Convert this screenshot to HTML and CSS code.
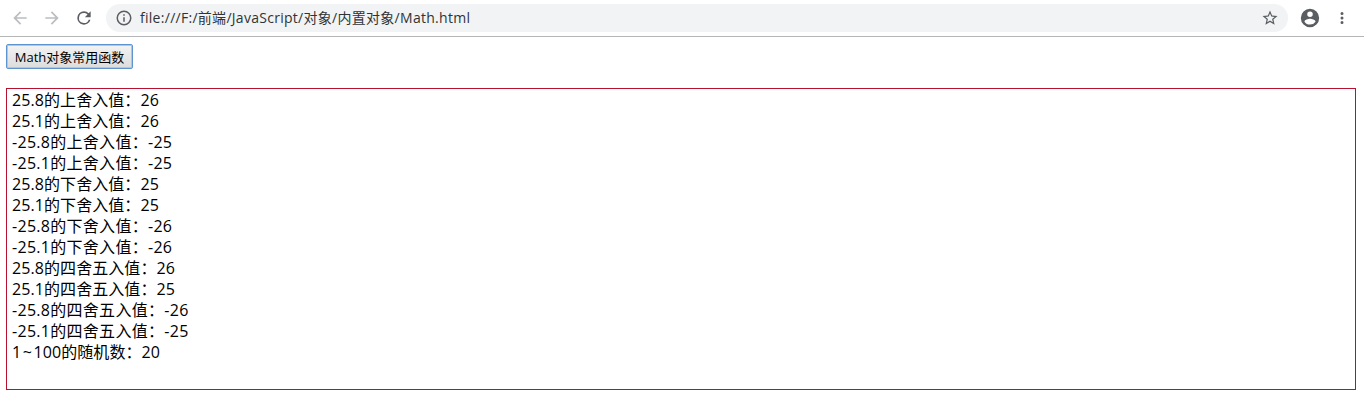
FILE: index.html
```html
<!DOCTYPE html>
<html lang="zh-CN">
<head>
    <meta charset="UTF-8">
    <title>Math</title>
    <link rel="stylesheet" href="styles.css">
</head>
<body>
    <div class="toolbar">
        <svg class="nav-icon disabled" viewBox="0 0 24 24"><path d="M20 11H7.83l5.59-5.59L12 4l-8 8 8 8 1.41-1.41L7.83 13H20v-2z"/></svg>
        <svg class="nav-icon disabled" viewBox="0 0 24 24"><path d="M12 4l-1.41 1.41L16.17 11H4v2h12.17l-5.58 5.59L12 20l8-8z"/></svg>
        <svg class="nav-icon" viewBox="0 0 24 24"><path d="M17.65 6.35A7.96 7.96 0 0 0 12 4a8 8 0 1 0 7.73 10h-2.08A6 6 0 1 1 12 6c1.66 0 3.14.69 4.22 1.78L13 11h7V4l-2.35 2.35z"/></svg>
        <div class="address-bar">
            <svg class="info-icon" viewBox="0 0 24 24"><path d="M11 17h2v-6h-2v6zm1-15a10 10 0 1 0 0 20 10 10 0 0 0 0-20zm0 18a8 8 0 1 1 0-16 8 8 0 0 1 0 16zM11 9h2V7h-2v2z"/></svg>
            <span class="url">file:///F:/前端/JavaScript/对象/内置对象/Math.html</span>
            <svg class="star-icon" viewBox="0 0 24 24"><path d="M22 9.24l-7.19-.62L12 2 9.19 8.63 2 9.24l5.46 4.73L5.82 21 12 17.27 18.18 21l-1.63-7.03L22 9.24zM12 15.4l-3.76 2.27 1-4.28-3.32-2.88 4.38-.38L12 6.1l1.71 4.04 4.38.38-3.32 2.88 1 4.28L12 15.4z"/></svg>
        </div>
        <svg class="user-icon" viewBox="0 0 24 24"><path d="M12 2a10 10 0 1 0 0 20 10 10 0 0 0 0-20zm0 3a3 3 0 1 1 0 6 3 3 0 0 1 0-6zm0 14.2a7.2 7.2 0 0 1-6-3.22c.03-1.99 4-3.08 6-3.08 1.99 0 5.97 1.09 6 3.08a7.2 7.2 0 0 1-6 3.22z"/></svg>
        <svg class="menu-icon" viewBox="0 0 24 24"><path d="M12 8a2 2 0 1 0 0-4 2 2 0 0 0 0 4zm0 2a2 2 0 1 0 0 4 2 2 0 0 0 0-4zm0 6a2 2 0 1 0 0 4 2 2 0 0 0 0-4z"/></svg>
    </div>

    <div class="page">
        <button class="math-btn">Math对象常用函数</button>
        <div class="result">
            <p>25.8的上舍入值：26</p>
            <p>25.1的上舍入值：26</p>
            <p class="negative">-25.8的上舍入值：-25</p>
            <p class="negative">-25.1的上舍入值：-25</p>
            <p>25.8的下舍入值：25</p>
            <p>25.1的下舍入值：25</p>
            <p class="negative">-25.8的下舍入值：-26</p>
            <p class="negative">-25.1的下舍入值：-26</p>
            <p>25.8的四舍五入值：26</p>
            <p>25.1的四舍五入值：25</p>
            <p class="negative">-25.8的四舍五入值：-26</p>
            <p class="negative">-25.1的四舍五入值：-25</p>
            <p><span class="range">1~</span>100的随机数：20</p>
        </div>
    </div>
</body>
</html>
```

FILE: styles.css
```css
* {
    margin: 0;
    padding: 0;
    box-sizing: border-box;
}

body {
    background: #fff;
    color: #000;
    font-family: "Open Sans", "Noto Sans CJK SC", sans-serif;
    font-size: 16px;
}

/* Browser toolbar */
.toolbar {
    display: flex;
    align-items: center;
    height: 37px;
    padding-left: 10px;
    border-bottom: 1px solid #b4b5b7;
}

.toolbar svg {
    flex: none;
    fill: #5a5d61;
}

.nav-icon {
    width: 20px;
    height: 20px;
    margin-right: 12px;
}

.toolbar .disabled {
    fill: #bcbdbf;
}

.address-bar {
    display: flex;
    align-items: center;
    width: 1182px;
    height: 28px;
    padding: 0 9px 0 9px;
    border-radius: 14px;
    background: #f1f3f4;
}

.info-icon {
    width: 18px;
    height: 18px;
}

.url {
    flex: 1;
    margin-left: 7px;
    color: #303336;
    font-size: 14px;
    letter-spacing: 0.28px;
    line-height: 28px;
    white-space: nowrap;
}

.star-icon {
    width: 18px;
    height: 18px;
}

.user-icon {
    width: 22px;
    height: 22px;
    margin-left: 11px;
}

.menu-icon {
    width: 18px;
    height: 18px;
    margin-left: 12px;
}

/* Page content */
.page {
    padding: 7px 8px 0 6px;
}

.math-btn {
    display: block;
    width: 127px;
    height: 25px;
    padding-top: 1px;
    border: 1px solid #5e94cf;
    border-radius: 2px;
    box-shadow: inset 0 0 0 1px #a9c9ec;
    background: linear-gradient(#f3f3f3, #dcdcdc);
    color: #000;
    font-family: inherit;
    font-size: 13px;
    line-height: 22px;
    white-space: nowrap;
}

.result {
    height: 302px;
    margin-top: 19px;
    padding: 1px 5px;
    border: 1px solid #b8102f;
}

.result p {
    height: 21px;
    letter-spacing: 0.08px;
    line-height: 21px;
    white-space: nowrap;
}

.result .negative {
    letter-spacing: 0.29px;
}

.range {
    letter-spacing: 1.6px;
}
```
